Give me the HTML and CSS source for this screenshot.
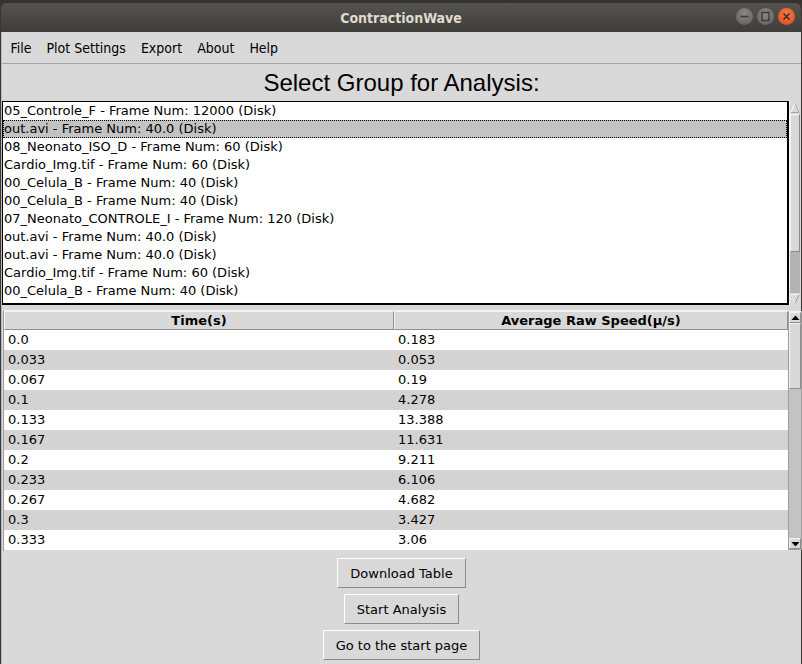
FILE: index.html
```html
<!DOCTYPE html>
<html>
<head>
<meta charset="utf-8">
<link rel="stylesheet" href="styles.css">
</head>
<body>
<div class="desktop"></div>
<header class="titlebar">
  <span class="title">ContractionWave</span>
  <div class="wbtns">
    <span class="wbtn"><svg width="17" height="17" viewBox="0 0 17 17"><line x1="4.5" y1="8.5" x2="12.5" y2="8.5" stroke="#3c3b37" stroke-width="1.6"/></svg></span>
    <span class="wbtn"><svg width="17" height="17" viewBox="0 0 17 17"><rect x="5" y="4.5" width="7" height="8" fill="none" stroke="#3c3b37" stroke-width="1.4"/></svg></span>
    <span class="wbtn close"><svg width="17" height="17" viewBox="0 0 17 17"><path d="M5.5 5.5 L11.5 11.5 M11.5 5.5 L5.5 11.5" stroke="#3c2a22" stroke-width="1.5"/></svg></span>
  </div>
</header>
<div class="window">
  <nav class="menubar">
    <span class="mitem">File</span>
    <span class="mitem">Plot Settings</span>
    <span class="mitem">Export</span>
    <span class="mitem">About</span>
    <span class="mitem">Help</span>
  </nav>
  <h1 class="heading">Select Group for Analysis:</h1>
  <div class="listarea">
    <ul class="listbox">
      <li>05_Controle_F - Frame Num: 12000 (Disk)</li>
      <li class="sel">out.avi - Frame Num: 40.0 (Disk)</li>
      <li>08_Neonato_ISO_D - Frame Num: 60 (Disk)</li>
      <li>Cardio_Img.tif - Frame Num: 60 (Disk)</li>
      <li>00_Celula_B - Frame Num: 40 (Disk)</li>
      <li>00_Celula_B - Frame Num: 40 (Disk)</li>
      <li>07_Neonato_CONTROLE_I - Frame Num: 120 (Disk)</li>
      <li>out.avi - Frame Num: 40.0 (Disk)</li>
      <li>out.avi - Frame Num: 40.0 (Disk)</li>
      <li>Cardio_Img.tif - Frame Num: 60 (Disk)</li>
      <li>00_Celula_B - Frame Num: 40 (Disk)</li>
    </ul>
    <div class="tkscroll">
      <span class="tkarrow"><svg width="11" height="12" viewBox="0 0 11 12"><path d="M5.5 1 L10 11 L1 11 Z" fill="#d9d9d9" stroke="#ffffff" stroke-width="1"/><path d="M10 11 L1 11 M5.5 1 L10 11" stroke="#9a9a9a" stroke-width="1"/></svg></span>
      <span class="tkslider"></span>
      <span class="tktrough"></span>
      <span class="tkarrow"><svg width="11" height="12" viewBox="0 0 11 12"><path d="M1 1 L10 1 L5.5 11 Z" fill="#d9d9d9" stroke="#9a9a9a" stroke-width="1"/><path d="M1 1 L10 1 M1 1 L5.5 11" stroke="#ffffff" stroke-width="1"/></svg></span>
    </div>
  </div>
  <div class="tablearea">
    <div class="tree">
      <div class="thead"><span class="th">Time(s)</span><span class="th">Average Raw Speed(μ/s)</span></div>
      <div class="tr"><span>0.0</span><span>0.183</span></div>
      <div class="tr"><span>0.033</span><span>0.053</span></div>
      <div class="tr"><span>0.067</span><span>0.19</span></div>
      <div class="tr"><span>0.1</span><span>4.278</span></div>
      <div class="tr"><span>0.133</span><span>13.388</span></div>
      <div class="tr"><span>0.167</span><span>11.631</span></div>
      <div class="tr"><span>0.2</span><span>9.211</span></div>
      <div class="tr"><span>0.233</span><span>6.106</span></div>
      <div class="tr"><span>0.267</span><span>4.682</span></div>
      <div class="tr"><span>0.3</span><span>3.427</span></div>
      <div class="tr"><span>0.333</span><span>3.06</span></div>
    </div>
    <div class="ttkscroll">
      <span class="ttkarrow"><svg width="9" height="6" viewBox="0 0 9 6"><path d="M4.5 0.5 L8.5 5 L0.5 5 Z" fill="#000"/></svg></span>
      <span class="ttkslider"></span>
      <span class="ttktrough"></span>
      <span class="ttkarrow"><svg width="9" height="6" viewBox="0 0 9 6"><path d="M0.5 1 L8.5 1 L4.5 5.5 Z" fill="#000"/></svg></span>
    </div>
  </div>
  <div class="buttons">
    <button class="btn">Download Table</button>
    <button class="btn">Start Analysis</button>
    <button class="btn">Go to the start page</button>
  </div>
</div>
</body>
</html>
```

FILE: styles.css
```css
* { box-sizing: border-box; }
html, body { margin: 0; padding: 0; }
body {
  width: 802px;
  height: 664px;
  overflow: hidden;
  background: #3a3935;
  font-family: "DejaVu Sans", sans-serif;
  font-size: 13px;
  color: #000;
}
.desktop {
  height: 3px;
  background: #34332f;
}
.titlebar {
  height: 29px;
  margin: 0 1px;
  border-radius: 6px 6px 0 0;
  background: linear-gradient(#56544f, #3e3d39);
  display: flex;
  align-items: center;
  justify-content: center;
  position: relative;
}
.title {
  font-family: "DejaVu Sans Condensed", "DejaVu Sans", sans-serif;
  font-stretch: condensed;
  font-weight: bold;
  font-size: 14px;
  color: #dfdbd2;
  margin-top: 1px;
}
.wbtns {
  position: absolute;
  right: 6px;
  top: 5px;
  display: flex;
  gap: 4px;
}
.wbtn {
  width: 17px;
  height: 17px;
  border-radius: 50%;
  background: radial-gradient(circle at 50% 35%, #8a8883, #5f5d58);
  display: block;
}
.wbtn svg { display: block; }
.wbtn.close {
  background: radial-gradient(circle at 50% 35%, #f37a4a, #d9491a);
}
.window {
  margin-left: 1px;
  width: 800px;
  height: 632px;
  background: #d9d9d9;
  border-left: 1px solid #b8b8b8;
}
.menubar {
  height: 32px;
  display: flex;
  align-items: center;
  padding-left: 1px;
  border-bottom: 1px solid #a3a3a3;
  font-family: "DejaVu Sans Condensed", "DejaVu Sans", sans-serif;
  font-stretch: condensed;
  font-size: 14px;
}
.mitem { padding: 0 7.5px; }
.heading {
  margin: 0;
  height: 37px;
  line-height: 37px;
  text-align: center;
  font-family: "Liberation Sans", Arial, sans-serif;
  font-weight: normal;
  font-size: 24px;
}
.listarea {
  display: flex;
  height: 204px;
}
.listbox {
  list-style: none;
  margin: 0;
  padding: 0;
  width: 787px;
  flex: none;
  height: 204px;
  background: #fff;
  border: 1px solid #000;
  border-right-width: 2px;
  border-bottom-width: 2px;
}
.listbox li {
  height: 18px;
  line-height: 18px;
  padding-left: 1px;
  white-space: nowrap;
}
.listbox li.sel {
  background: #c3c3c3;
  outline: 1px dotted #000;
  outline-offset: -1px;
}
.tkscroll {
  width: 12px;
  flex: none;
  display: flex;
  flex-direction: column;
  background: #d9d9d9;
  border-left: 1px solid #f4f4f4;
  border-right: 1px solid #d9d9d9;
  padding-top: 1px;
}
.tkarrow {
  height: 12px;
  flex: none;
  background: #d9d9d9;
  display: flex;
  align-items: center;
  justify-content: center;
}
.tkarrow svg { display: block; }
.tkslider {
  height: 138px;
  flex: none;
  background: #d9d9d9;
  border: 1px solid;
  border-color: #f4f4f4 #8a8a8a #8a8a8a #f4f4f4;
}
.tktrough { flex: 1; background: #b3b3b3; }
.tablearea {
  display: flex;
  margin-top: 5px;
  height: 241px;
  padding-left: 1px;
  padding-right: 1px;
}
.tree {
  width: 785px;
  flex: none;
  border-left: 1px solid #9d9d9d;
  border-top: 1px solid #f3f3f3;
  background: #d9d9d9;
}
.thead {
  display: grid;
  grid-template-columns: 390px 1fr;
  height: 19px;
}
.th {
  font-weight: bold;
  text-align: center;
  line-height: 17px;
  border: 1px solid;
  border-color: #f2f2f2 #8f8f8f #8f8f8f #f2f2f2;
  background: #d9d9d9;
}
.tr {
  display: grid;
  grid-template-columns: 390px 1fr;
  height: 20px;
  line-height: 20px;
  background: #fff;
}
.tr:nth-child(odd) { background: #d3d3d3; }
.tr span { padding-left: 4px; }
.ttkscroll {
  width: 14px;
  flex: none;
  display: flex;
  flex-direction: column;
  background: #c3c3c3;
  border: 1px solid #9d9d9d;
  border-top-color: #f3f3f3;
  margin-top: 1px;
  height: 239px;
}
.ttkarrow {
  height: 11px;
  flex: none;
  background: #d9d9d9;
  border: 1px solid;
  border-color: #f2f2f2 #8f8f8f #8f8f8f #f2f2f2;
  display: flex;
  align-items: center;
  justify-content: center;
}
.ttkarrow svg { display: block; }
.ttkslider {
  height: 66px;
  flex: none;
  background: #d9d9d9;
  border: 1px solid;
  border-color: #f2f2f2 #8f8f8f #8f8f8f #f2f2f2;
}
.ttktrough { flex: 1; }
.buttons {
  display: flex;
  flex-direction: column;
  align-items: center;
  gap: 6px;
  padding-top: 7px;
}
.btn {
  height: 30px;
  padding: 0 12px;
  margin: 0;
  font-family: "DejaVu Sans", sans-serif;
  font-size: 13px;
  color: #000;
  background: #d9d9d9;
  border: 1px solid;
  border-color: #ffffff #8c8c8c #8c8c8c #ffffff;
  border-radius: 0;
}
```
